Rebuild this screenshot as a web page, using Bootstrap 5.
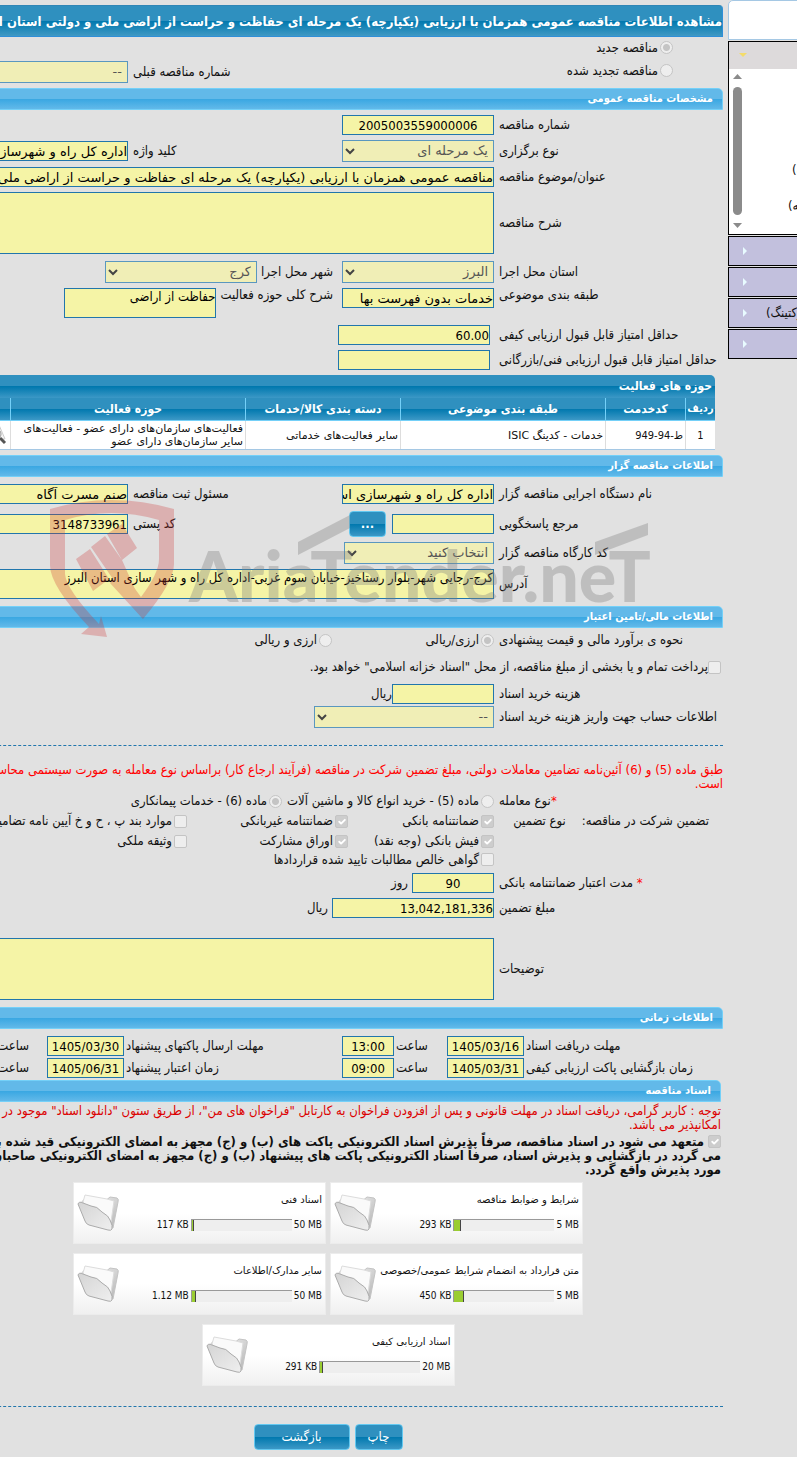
<!DOCTYPE html>
<html lang="fa" dir="rtl">
<head>
<meta charset="utf-8">
<meta name="viewport" content="width=device-width, initial-scale=1">
<title>مشاهده اطلاعات مناقصه عمومی</title>
<link rel="stylesheet" href="https://cdn.jsdelivr.net/npm/bootstrap@5.3.0/dist/css/bootstrap.min.css">
<style>
:root{--ink:#2176ac;--field:#f5f4a6;--dark:linear-gradient(#2f90bf 50%,#0078ae 50%,#3c98c6);--cond:"DejaVu Sans Condensed","DejaVu Sans",sans-serif}
body{background:#e1e1e1;color:#111;font:13px/14px var(--cond);overflow-x:hidden}
.shell{gap:5px}
.side{width:69px;direction:ltr;overflow:hidden}
.side-in{width:200px}
.side-logo{height:40px;background:#fff;border:1px solid #a5c8e4;border-radius:5px 0 0 0}
.side-box{height:194px;margin-top:1px;border:1px solid #000;background:#fff}
.side-head{height:27px;background:#dddadb;padding-left:10px}
.side-scroll{width:16px;padding:5px 0}
.side-thumb{width:9px;height:128px;background:#8b8b8b;border-radius:5px}
.side-list{padding:83px 0 0 43px;line-height:36px;white-space:nowrap}
.side-item{height:30px;margin-top:1px;border:1px solid #000;background:#c2c0dd;color:#111;text-decoration:none;padding-left:14px;gap:18px;white-space:nowrap}
.main{overflow:hidden}
.main-in{min-width:790px;padding-top:5px}
.title-bar{height:32px;padding-top:2px;border:1px solid #2f8fd8;border-top-color:#2f86b6;border-radius:0 4px 0 0;background:linear-gradient(#2f90bf 50%,#0078ae 50%,#4099c4);color:#fff;font:700 13px/14px var(--cond);white-space:nowrap;margin:0}
.sec{height:22px;padding-right:9px;margin:5px 0 0;border:1px solid #74d0f8;border-radius:0 5px 0 0;background:linear-gradient(#62b9e9 50%,#39a7e2 50%,#62b9e9);color:#fff;font:700 11px/14px var(--cond)}
.frow{display:grid;grid-template-columns:224px 152px 204px 1fr;column-gap:5px;align-items:center;margin-top:5px;min-height:20px;white-space:nowrap}
.lbl{text-align:left}
.times{grid-template-columns:197px 77px 49px 52px 214px 77px 1fr;column-gap:2px}
.wide{grid-column:2/-1}
.fld,.sel{height:20px;width:152px;padding:0;border:1px solid var(--ink);border-radius:0;background-color:var(--field)!important;color:#000;font:13px/18px "DejaVu Sans",sans-serif}
.sel{height:22px;padding:0 5px 0 22px;border-color:#5a97bf;background:#f0eeb6 url("data:image/svg+xml,%3Csvg xmlns='http://www.w3.org/2000/svg' viewBox='0 0 10 7'%3E%3Cpath d='M1 1l4 4 4-4' fill='none' stroke='%23444' stroke-width='2'/%3E%3C/svg%3E") no-repeat 2px center/10px 7px;background-color:#f0eeb6!important;color:#555!important;opacity:1}
.area{width:100%;height:62px;min-height:0!important;resize:none;overflow:hidden;white-space:nowrap;font:13px/16px var(--cond)}
.area-sm{height:30px}
.digits{font-family:var(--cond)}
.w77{width:77px}.w52{width:52px}.w82{width:82px}.w162{width:162px}.w150{width:150px}.w152{width:152px}.w180{width:180px}.w102{width:102px}
.pad2{padding-right:2px}.pad14{padding-right:14px}.pad50{padding-right:50px}
.opt{display:inline-flex;align-items:center;gap:2px}
.opt .form-check-input{width:13px;height:13px;margin:0;border:1px solid #c4c4c4;background-color:#eee;opacity:1;float:none;flex-shrink:0}
.opt .form-check-input[type=checkbox]{border-radius:2px}
.opt .form-check-input:checked[type=radio]{background-image:radial-gradient(circle,#c4c4c4 3px,#eee 4px)}
.opt .form-check-input:checked[type=checkbox]{background-color:#cdcdcd;background-size:12px}
.opt .form-check-input~label,.agree label{opacity:1}
.checks{display:grid;grid-template-columns:146px 161px 1fr}
.pay{height:20px;padding-right:2px}
.btn-blue{height:26px;padding:0;border:1px solid #63c8f0;border-radius:4px;background:var(--dark);color:#fff;font-size:13px;line-height:14px}
.print{width:48px}.back{width:96px}
.lookup{width:37px;margin-right:6px;font-weight:700}
.rule{border:0;border-top:1px dashed var(--ink);opacity:1;margin:0}
.act{width:calc(100% - 8px);margin:5px 8px 0 0;table-layout:fixed;font-size:11px;line-height:13px;border-bottom:1px solid #a5c8e4;border-collapse:separate;border-spacing:0;color:#111}
.act caption{caption-side:top;height:23px;padding:4px 3px;background:var(--dark);color:#fff;font:700 12px/14px var(--cond);border-radius:0 5px 0 0;text-align:right}
.act th{height:23px;padding:0;text-align:center;background:var(--dark);color:#fff;font:700 12px/14px var(--cond);border-bottom:1px solid #74d0f8;border-left:1px solid #74d0f8;white-space:nowrap}
.act th:first-child{font-size:11px}
.act td{height:28px;padding:0 2px;background:#fff;border-left:1px solid #ddd;vertical-align:middle;font-family:"DejaVu Sans",sans-serif}
.act .digits{font:11px/13px var(--cond)}
.red{color:#f00}.red-dark{color:#dc0000}
.nowr{white-space:nowrap}
.note{margin:0}
.agree{margin-top:3px;font:700 13px/14px var(--cond);white-space:nowrap}
.agree .opt{vertical-align:top}
.files{display:grid;grid-template-columns:253px 253px;gap:9px 4px;justify-content:center;margin-top:5px}
.file{height:62px;width:253px;direction:ltr;background:linear-gradient(#fff 50%,#f0f0f0);border:1px solid #ececec;font:10px/12px "DejaVu Sans",sans-serif;padding:11px 3px 0}
.file-last{grid-column:1/-1;justify-self:center}
.bar{gap:2px;margin-top:13px;font-family:var(--cond)}
.meter{width:101px;height:12px;border-top:1px solid #999;border-left:1px solid #999;background:#eee}
.meter div{height:11px;background:#9acd32;border-right:1px solid #444}
.acts{gap:5px}
.g0{margin-top:0}.g2{margin-top:2px}.g7{margin-top:7px}.g17{margin-top:17px}.g20{margin-top:20px}
.mark-over{position:absolute;left:48px;top:498px;pointer-events:none}
.mark-over text{font-family:Lato,sans-serif;font-weight:900}
</style>
</head>
<body>
<svg width="0" height="0" class="position-absolute">
<defs>
<linearGradient id="paper" x1="0" y1="0" x2="1" y2="1"><stop offset="0" stop-color="#f5f5f5"/><stop offset="1" stop-color="#b5b5b5"/></linearGradient>
<linearGradient id="front" x1="0" y1="0" x2="1" y2="1"><stop offset="0" stop-color="#d4d4d4"/><stop offset="1" stop-color="#efefef"/></linearGradient>
<symbol id="folder" viewBox="0 0 42 38"><path d="M4 9L9 3 27 8 33 3 40 4Q42 5 41 8L36 34 25 30Z" fill="url(#paper)" stroke="#c4c4c4"/><path d="M6 8L8 1 30 5 37 7 34 28 12 18Z" fill="#fafafa" stroke="#dcdcdc"/><path d="M1 10Q2 7 6 9L14 12Q20 12 25 18 32 22 33 26 36 32 35 35 34 37 31 36L12 31Q9 30 8 27Z" fill="url(#front)" stroke="#ababab"/></symbol>
</defs>
</svg>
<div class="shell d-flex position-relative">
<aside class="side flex-shrink-0"><div class="side-in">
  <div class="side-logo"></div>
  <div class="side-box">
    <div class="side-head d-flex align-items-center"><svg width="8" height="5"><path d="M0 0h8L4 4z" fill="#f4dc6a"/></svg></div>
    <div class="d-flex">
      <div class="side-scroll d-flex flex-column align-items-center gap-2">
        <svg width="9" height="5"><path d="M0 5h9L4.500 0z" fill="#8b8b8b"/></svg>
        <div class="side-thumb"></div>
        <svg width="9" height="5"><path d="M0 0h9L4.500 5z" fill="#8b8b8b"/></svg>
      </div>
      <div class="side-list"><div dir="rtl" class="text-start ps-1">(مناقصه)</div><div dir="rtl" class="text-start">(یکپارچه)</div></div>
    </div>
  </div>
  <a href="#" class="side-item d-flex align-items-center"><svg width="5" height="9"><path d="M0 0v8l4-4z" fill="#e8fbff"/></svg></a>
  <a href="#" class="side-item d-flex align-items-center"><svg width="5" height="9"><path d="M0 0v8l4-4z" fill="#e8fbff"/></svg></a>
  <a href="#" class="side-item d-flex align-items-center"><svg width="5" height="9"><path d="M0 0v8l4-4z" fill="#e8fbff"/></svg><span dir="rtl">(مارکتینگ)</span></a>
  <a href="#" class="side-item d-flex align-items-center"><svg width="5" height="9"><path d="M0 0v8l4-4z" fill="#e8fbff"/></svg></a>
</div></aside>

<main class="main flex-grow-1"><form class="main-in">
  <h1 class="title-bar d-flex align-items-center">مشاهده اطلاعات مناقصه عمومی همزمان با ارزیابی (یکپارچه) یک مرحله ای حفاظت و حراست از اراضی ملی و دولتی استان البرز</h1>

  <div class="frow g2"><div class="pad50"><span class="opt"><input class="form-check-input" type="radio" name="kind" id="k1" checked disabled><label for="k1">مناقصه جدید</label></span></div></div>
  <div class="frow g2"><div class="pad50"><span class="opt"><input class="form-check-input" type="radio" name="kind" id="k2" disabled><label for="k2">مناقصه تجدید شده</label></span></div><span></span><label class="lbl" for="prev">شماره مناقصه قبلی</label><select class="form-select sel" id="prev" disabled><option>--</option></select></div>

  <h2 class="sec d-flex align-items-center">مشخصات مناقصه عمومی</h2>
  <div class="frow"><label class="lbl" for="no">شماره مناقصه</label><input class="form-control fld digits text-center" id="no" value="2005003559000006" readonly></div>
  <div class="frow"><label class="lbl" for="hold">نوع برگزاری</label><select class="form-select sel" id="hold" disabled><option>یک مرحله ای</option></select><label class="lbl" for="kw">کلید واژه</label><input class="form-control fld" id="kw" value="اداره کل راه و شهرسازی استان البرز" readonly></div>
  <div class="frow"><label class="lbl" for="subj">عنوان/موضوع مناقصه</label><div class="wide"><input class="form-control fld w-100" id="subj" value="مناقصه عمومی همزمان با ارزیابی (یکپارچه) یک مرحله ای حفاظت و حراست از اراضی ملی و دولتی استان البرز" readonly></div></div>
  <div class="frow"><label class="lbl" for="desc">شرح مناقصه</label><div class="wide d-flex"><textarea class="form-control fld area" id="desc" readonly></textarea></div></div>
  <div class="frow g7"><label class="lbl" for="prov">استان محل اجرا</label><select class="form-select sel" id="prov" disabled><option>البرز</option></select><div class="d-flex align-items-center gap-1 pe-1"><label for="city">شهر محل اجرا</label><select class="form-select sel flex-shrink-0" id="city" disabled><option>کرج</option></select></div></div>
  <div class="frow align-items-start"><label class="lbl" for="cls">طبقه بندی موضوعی</label><input class="form-control fld" id="cls" value="خدمات بدون فهرست بها" readonly><div class="d-flex gap-1 pe-1"><label for="act">شرح کلی حوزه فعالیت</label><textarea class="form-control fld area area-sm flex-shrink-0 w152" id="act" readonly>حفاظت از اراضی</textarea></div></div>
  <div class="frow g7"><label class="lbl" for="q1">حداقل امتیاز قابل قبول ارزیابی کیفی</label><div class="pe-1"><input class="form-control fld digits" id="q1" value="60.00" readonly></div></div>
  <div class="frow"><label class="lbl" for="q2">حداقل امتیاز قابل قبول ارزیابی فنی/بازرگانی</label><div class="pe-1"><input class="form-control fld digits" id="q2" readonly></div></div>

  <table class="act">
    <caption>حوزه های فعالیت</caption>
    <colgroup><col style="width:30px"><col style="width:80px"><col style="width:205px"><col style="width:155px"><col style="width:235px"><col></colgroup>
    <thead><tr><th>ردیف</th><th>کدخدمت</th><th>طبقه بندی موضوعی</th><th>دسته بندی کالا/خدمات</th><th>حوزه فعالیت</th><th></th></tr></thead>
    <tbody><tr><td class="text-center digits">1</td><td class="digits">ط-94-949</td><td>خدمات - کدینگ ISIC</td><td>سایر فعالیت‌های خدماتی</td><td>فعالیت‌های سازمان‌های دارای عضو - فعالیت‌های سایر سازمان‌های دارای عضو</td><td><svg width="20" height="20" viewBox="0 0 20 20" class="d-block"><path d="M3 0h8l6 14H0z" fill="#f4f4f4" stroke="#ccc"/><circle cx="8" cy="9" r="5" fill="#eee" stroke="#999"/><path d="M12 13l5 5" stroke="#555" stroke-width="3"/></svg></td></tr></tbody>
  </table>

  <h2 class="sec d-flex align-items-center">اطلاعات مناقصه گزار</h2>
  <div class="frow g7"><label class="lbl" for="org">نام دستگاه اجرایی مناقصه گزار</label><input class="form-control fld" id="org" value="اداره کل راه و شهرسازی استان البرز" readonly><label class="lbl" for="reg">مسئول ثبت مناقصه</label><input class="form-control fld" id="reg" value="صنم مسرت آگاه" readonly></div>
  <div class="frow g7"><label class="lbl" for="ref">مرجع پاسخگویی</label><div class="d-flex align-items-center"><input class="form-control fld w102" id="ref" readonly><button type="button" class="btn btn-blue lookup">...</button></div><label class="lbl" for="zip">کد پستی</label><input class="form-control fld digits" id="zip" value="3148733961" readonly></div>
  <div class="frow"><label class="lbl" for="wk">کد کارگاه مناقصه گزار</label><select class="form-select sel w150" id="wk" disabled><option>انتخاب کنید</option></select></div>
  <div class="frow"><label class="lbl" for="addr">آدرس</label><div class="wide d-flex"><textarea class="form-control fld area area-sm" id="addr" readonly>کرج-رجایی شهر-بلوار رستاخیز-خیابان سوم غربی-اداره کل راه و شهر سازی استان البرز</textarea></div></div>

  <h2 class="sec g7 d-flex align-items-center">اطلاعات مالی/تامین اعتبار</h2>
  <div class="frow g2"><span class="lbl">نحوه ی برآورد مالی و قیمت پیشنهادی</span><div class="wide checks"><span class="opt"><input class="form-check-input" type="radio" name="est" id="e1" checked disabled><label for="e1">ارزی/ریالی</label></span><span class="opt pe-3"><input class="form-check-input" type="radio" name="est" id="e2" disabled><label for="e2">ارزی و ریالی</label></span></div></div>
  <div class="pay g7 d-flex align-items-center nowr"><span class="opt"><input class="form-check-input" type="checkbox" id="pay" disabled></span><label for="pay">پرداخت تمام و یا بخشی از مبلغ مناقصه، از محل "اسناد خزانه اسلامی" خواهد بود.</label></div>
  <div class="frow g7"><label class="lbl" for="fee">هزینه خرید اسناد</label><div class="d-flex align-items-center"><input class="form-control fld w102 digits" id="fee" readonly><span>ریال</span></div></div>
  <div class="frow g2"><label class="lbl" for="acc">اطلاعات حساب جهت واریز هزینه خرید اسناد</label><select class="form-select sel w180" id="acc" disabled><option>--</option></select></div>
  <hr class="rule g17">
  <p class="red nowr note g17">طبق ماده (5) و (6) آئین‌نامه تضامین معاملات دولتی، مبلغ تضمین شرکت در مناقصه (فرآیند ارجاع کار) براساس نوع معامله به صورت سیستمی محاسبه<br>است.</p>

  <div class="frow g0"><span class="lbl"><span class="red">*</span>نوع معامله</span><div class="wide d-flex shell"><span class="opt"><input class="form-check-input" type="radio" name="deal" id="d1" disabled><label for="d1">ماده (5) - خرید انواع کالا و ماشین آلات</label></span><span class="opt"><input class="form-check-input" type="radio" name="deal" id="d2" checked disabled><label for="d2">ماده (6) - خدمات پیمانکاری</label></span></div></div>
  <div class="frow g0"><div class="d-flex gap-3 pad14"><span>تضمین شرکت در مناقصه:</span><span>نوع تضمین</span></div><div class="wide checks"><span class="opt"><input class="form-check-input" type="checkbox" id="c1" checked disabled><label for="c1">ضمانتنامه بانکی</label></span><span class="opt"><input class="form-check-input" type="checkbox" id="c2" checked disabled><label for="c2">ضمانتنامه غیربانکی</label></span><span class="opt"><input class="form-check-input" type="checkbox" id="c3" disabled><label for="c3">موارد بند پ ، ح و خ آیین نامه تضامین</label></span></div></div>
  <div class="frow g0"><span></span><div class="wide checks"><span class="opt"><input class="form-check-input" type="checkbox" id="c4" checked disabled><label for="c4">فیش بانکی (وجه نقد)</label></span><span class="opt"><input class="form-check-input" type="checkbox" id="c5" checked disabled><label for="c5">اوراق مشارکت</label></span><span class="opt"><input class="form-check-input" type="checkbox" id="c6" disabled><label for="c6">وثیقه ملکی</label></span></div></div>
  <div class="frow g0"><span></span><div class="wide"><span class="opt"><input class="form-check-input" type="checkbox" id="c7" disabled><label for="c7">گواهی خالص مطالبات تایید شده قراردادها</label></span></div></div>
  <div class="frow g2"><label class="lbl" for="dur"><span class="red">*</span> مدت اعتبار ضمانتنامه بانکی</label><div class="d-flex align-items-center gap-1"><input class="form-control fld digits text-center w82" id="dur" value="90" readonly><span>روز</span></div></div>
  <div class="frow"><label class="lbl" for="amt">مبلغ تضمین</label><div class="d-flex align-items-center gap-1"><input class="form-control fld digits w162 flex-shrink-0" id="amt" value="13,042,181,336" readonly><span>ریال</span></div></div>
  <div class="frow g20"><label class="lbl" for="memo">توضیحات</label><div class="wide d-flex"><textarea class="form-control fld area" id="memo" readonly></textarea></div></div>

  <h2 class="sec g7 d-flex align-items-center">اطلاعات زمانی</h2>
  <div class="frow times g7"><label class="lbl" for="t1">مهلت دریافت اسناد</label><input class="form-control fld digits text-center w77" id="t1" value="1405/03/16" readonly><label class="lbl" for="t2">ساعت</label><input class="form-control fld digits text-center w52" id="t2" value="13:00" readonly><label class="lbl" for="t3">مهلت ارسال پاکتهای پیشنهاد</label><input class="form-control fld digits text-center w77" id="t3" value="1405/03/30" readonly><span class="pe-3">ساعت</span></div>
  <div class="frow times g2"><label class="lbl" for="t4">زمان بازگشایی پاکت ارزیابی کیفی</label><input class="form-control fld digits text-center w77" id="t4" value="1405/03/31" readonly><label class="lbl" for="t5">ساعت</label><input class="form-control fld digits text-center w52" id="t5" value="09:00" readonly><label class="lbl" for="t6">زمان اعتبار پیشنهاد</label><input class="form-control fld digits text-center w77" id="t6" value="1405/06/31" readonly><span class="pe-3">ساعت</span></div>

  <section class="pad2">
  <h2 class="sec g2 d-flex align-items-center">اسناد مناقصه</h2>
  <p class="red-dark nowr mb-0 g2">توجه : کاربر گرامی، دریافت اسناد در مهلت قانونی و پس از افزودن فراخوان به کارتابل "فراخوان های من"، از طریق ستون "دانلود اسناد" موجود در این<br>امکانپذیر می باشد.</p>
  <div class="agree"><span class="opt"><input class="form-check-input" type="checkbox" id="agr" checked disabled></span> <label class="d-inline" for="agr">متعهد می شود در اسناد مناقصه، صرفاً پذیرش اسناد الکترونیکی پاکت های (ب) و (ج) مجهز به امضای الکترونیکی قید شده باشد<br>می گردد در بازگشایی و پذیرش اسناد، صرفاً اسناد الکترونیکی پاکت های پیشنهاد (ب) و (ج) مجهز به امضای الکترونیکی صاحبان امضا<br>مورد پذیرش واقع گردد.</label></div>
  </section>
  <div class="files">
    <div class="file d-flex"><svg width="42" height="38" class="flex-shrink-0"><use href="#folder"/></svg><div class="flex-grow-1"><div dir="rtl">شرایط و ضوابط مناقصه</div><div class="d-flex justify-content-end align-items-center bar"><span>293 KB</span><div class="meter"><div style="width:7px"></div></div><span>5 MB</span></div></div></div>
    <div class="file d-flex"><svg width="42" height="38" class="flex-shrink-0"><use href="#folder"/></svg><div class="flex-grow-1"><div dir="rtl">اسناد فنی</div><div class="d-flex justify-content-end align-items-center bar"><span>117 KB</span><div class="meter"><div style="width:2px"></div></div><span>50 MB</span></div></div></div>
    <div class="file d-flex"><svg width="42" height="38" class="flex-shrink-0"><use href="#folder"/></svg><div class="flex-grow-1"><div dir="rtl" class="nowr">متن قرارداد به انضمام شرایط عمومی/خصوصی</div><div class="d-flex justify-content-end align-items-center bar"><span>450 KB</span><div class="meter"><div style="width:10px"></div></div><span>5 MB</span></div></div></div>
    <div class="file d-flex"><svg width="42" height="38" class="flex-shrink-0"><use href="#folder"/></svg><div class="flex-grow-1"><div dir="rtl">سایر مدارک/اطلاعات</div><div class="d-flex justify-content-end align-items-center bar"><span>1.12 MB</span><div class="meter"><div style="width:4px"></div></div><span>50 MB</span></div></div></div>
    <div class="file file-last d-flex"><svg width="42" height="38" class="flex-shrink-0"><use href="#folder"/></svg><div class="flex-grow-1"><div dir="rtl">اسناد ارزیابی کیفی</div><div class="d-flex justify-content-end align-items-center bar"><span>291 KB</span><div class="meter"><div style="width:3px"></div></div><span>20 MB</span></div></div></div>
  </div>
  <hr class="rule g20">
  <div class="acts g17 d-flex justify-content-center"><button type="button" class="btn btn-blue print">چاپ</button><button type="button" class="btn btn-blue back">بازگشت</button></div>
</form></main>

<svg class="mark-over" width="610" height="142" viewBox="0 0 610 142">
  <g opacity=".28" fill="#cc3333"><path d="M2 11Q63-7 126 11V66Q126 84 95 121L62 85 73 72 93 99Q111 75 111 61V22Q63 8 17 22V76Q18 91 51 126L53 118 59 139 33 136 41 129Q2 88 2 67Z"/><path d="M59 36L74 26 89 50 74 62ZM43 49L57 38 74 62 90 98 95 121 80 103ZM28 61L42 51 61 81 45 93Z"/></g>
  <g opacity=".35" fill="#808080"><text x="141" y="104" font-size="70" direction="ltr">AriaTender.neT</text><path d="M250 44L302 17V30L250 57ZM547 44L600 25V37L547 57Z"/></g>
</svg>
</div>
<script src="https://cdn.jsdelivr.net/npm/bootstrap@5.3.0/dist/js/bootstrap.bundle.min.js"></script>
</body>
</html>
